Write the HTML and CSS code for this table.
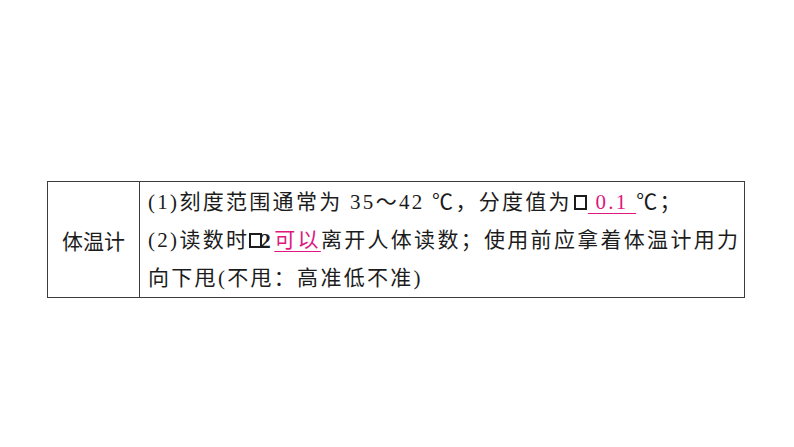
FILE: index.html
```html
<!DOCTYPE html>
<html lang="zh">
<head>
<meta charset="utf-8">
<link rel="stylesheet" href="styles.css">
</head>
<body>
<div class="page">
  <div class="table">
    <div class="head">体温计</div>
    <div class="body">
      <div class="line">(1)刻度范围通常为 35～42 ℃，分度值为<span class="box"></span><span class="blank">&nbsp;0.1&nbsp;</span>℃；</div>
      <div class="line">(2)读数时<span class="box2"><span class="box"></span><span class="two">2</span></span><span class="blank">可以</span>离开人体读数；使用前应拿着体温计用力</div>
      <div class="line">向下甩(不甩：高准低不准)</div>
    </div>
  </div>
</div>
</body>
</html>
```
FILE: styles.css
```css
html, body {
  margin: 0;
  padding: 0;
  background: #ffffff;
}
.page {
  padding: 181px 0 0 47px;
}
.table {
  box-sizing: border-box;
  width: 698px;
  height: 117px;
  display: grid;
  grid-template-columns: 92px 1fr;
  border: 1px solid #3c3c3c;
  font-family: "Liberation Serif", "Noto Sans CJK SC", serif;
  color: #1c1c1c;
  font-size: 21px;
}
.head {
  border-right: 1px solid #3c3c3c;
  display: flex;
  align-items: center;
  justify-content: center;
}
.body {
  padding: 1px 0 0 8px;
  letter-spacing: 2.3px;
}
.line {
  line-height: 38px;
  height: 38px;
  white-space: nowrap;
}
.box {
  display: inline-block;
  box-sizing: border-box;
  width: 13px;
  height: 15px;
  border: 2.5px solid #1c1c1c;
  vertical-align: -1px;
  margin: 0 1px 0 2px;
}
.box2 {
  display: inline-block;
  position: relative;
  width: 25px;
  vertical-align: baseline;
}
.box2 .box {
  margin: 0;
}
.two {
  position: absolute;
  left: 11px;
  bottom: -1px;
  font-weight: bold;
}
.blank {
  color: #e0177f;
  text-decoration: underline;
  text-decoration-color: #e0177f;
  text-underline-offset: 4px;
  text-decoration-thickness: 1px;
}
```
